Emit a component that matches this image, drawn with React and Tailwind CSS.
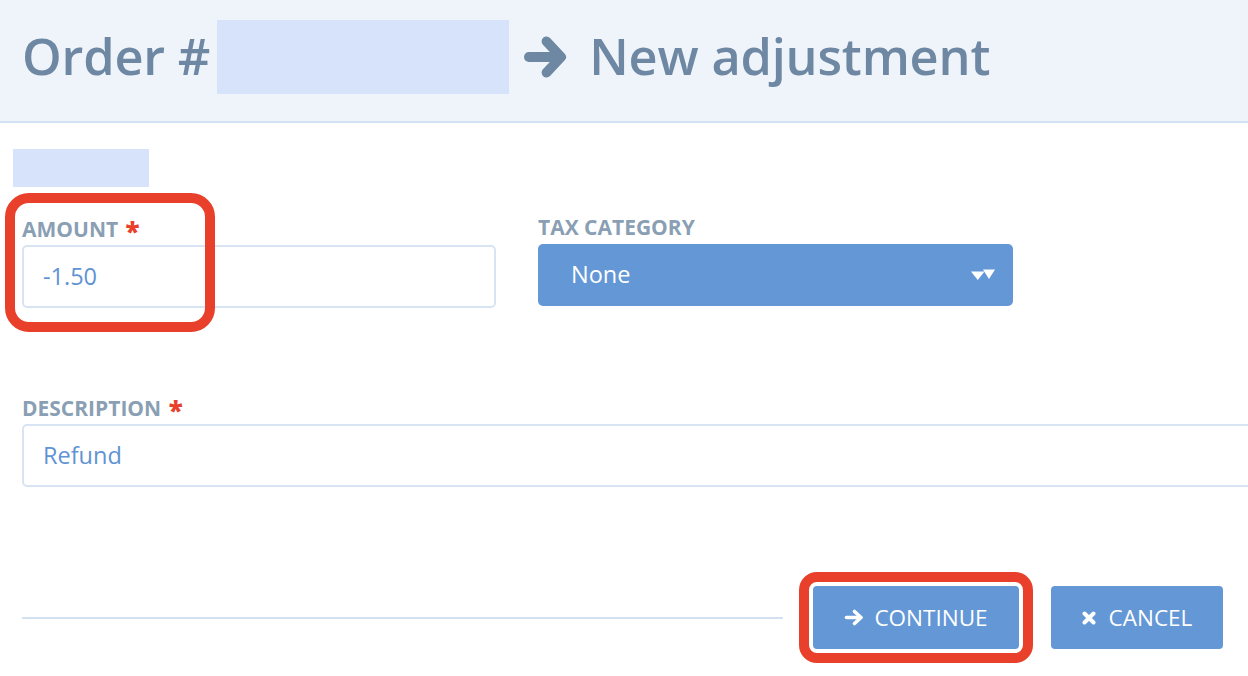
import React from "react";

const font = { fontFamily: '"Open Sans", "Noto Sans", sans-serif' };

function TitleArrow() {
  return (
    <svg viewBox="0 0 44 44" className="w-[43px] h-[44px]" fill="none" stroke="#6e88a3" strokeLinecap="round" strokeLinejoin="round">
      <path d="M5 22H37" strokeWidth="10" />
      <path d="M23 6L38 22L23 38" strokeWidth="10" />
    </svg>
  );
}

function BtnArrow() {
  return (
    <svg viewBox="0 0 20 17" className="w-[20px] h-[17px]" fill="none" stroke="white" strokeLinecap="round" strokeLinejoin="round">
      <path d="M2.5 8.5H16.5" strokeWidth="3.6" />
      <path d="M10.5 2.5L17 8.5L10.5 14.5" strokeWidth="3.6" />
    </svg>
  );
}

function XIcon() {
  return (
    <svg viewBox="0 0 14 14" className="w-[14px] h-[14px]" fill="none" stroke="white" strokeLinecap="round">
      <path d="M2.5 2.5L11.5 11.5M11.5 2.5L2.5 11.5" strokeWidth="4" />
    </svg>
  );
}

function Caret() {
  return (
    <svg viewBox="0 0 24 12" className="w-[24px] h-[12px]" fill="white">
      <path d="M0 2.5h13.5L6.75 11z" />
      <path d="M12 0.5h12l-6 9.5z" />
    </svg>
  );
}

const labelCls = "block h-[26px] text-[21px] leading-[26px] font-bold text-[#8a9fb4] whitespace-nowrap";

function Star() {
  return <span className="relative top-[4px] ml-[2px] text-[#e8402a] text-[26px] font-extrabold leading-none">*</span>;
}

export default function App() {
  return (
    <div className="w-[1248px] h-[676px] bg-white overflow-hidden" style={font}>
      <header className="h-[123px] bg-[#eff4fb] border-b-2 border-[#d3e2f3] flex items-center pl-[22px] pb-[8px]">
        <h1 className="flex items-center text-[50.5px] font-semibold text-[#6e88a3] leading-none tracking-[-0.2px]">
          <span>Order #</span>
          <span className="ml-[7px] w-[292px] h-[74px] bg-[#d6e3fa]" />
          <span className="ml-[15px]"><TitleArrow /></span>
          <span className="ml-[22px]">New adjustment</span>
        </h1>
      </header>

      <div className="relative">
        <div className="ml-[13px] mt-[26px] w-[136px] h-[38px] bg-[#d6e3fa]" />

        <div className="flex px-[22px] mt-[27px] gap-[42px]">
          <div className="relative w-[474px]">
            <div className="absolute left-[-17px] top-[-21px] w-[210px] h-[139px] border-[10px] border-[#e8402a] rounded-[24px] pointer-events-none" />
            <label className={labelCls}>
              AMOUNT <Star />
            </label>
            <div className="mt-[5px] h-[63px] border-2 border-[#d8e4f3] rounded-[5px] flex items-center pl-[19px] text-[23.5px] text-[#5f93d4]">
              -1.50
            </div>
          </div>
          <div className="w-[475px]">
            <label className={labelCls}>TAX CATEGORY</label>
            <div className="mt-[4px] h-[62px] bg-[#6497d6] rounded-[5px] flex items-center justify-between pl-[33px] pr-[18px] text-[23.5px] text-white">
              <span>None</span>
              <Caret />
            </div>
          </div>
        </div>

        <div className="pl-[22px] mt-[85px]">
          <label className={labelCls}>
            DESCRIPTION <Star />
          </label>
          <div className="mt-[5px] h-[63px] w-[1240px] border-2 border-[#d8e4f3] rounded-[5px] flex items-center pl-[19px] text-[23.5px] text-[#5f93d4]">
            Refund
          </div>
        </div>

        <div className="flex items-center pl-[22px] pr-[25px] mt-[99px]">
          <div className="flex-1 h-[2px] bg-[#d3e1f2]" />
          <button className="ml-[30px] w-[206px] h-[63px] bg-[#6497d6] rounded-[4px] flex items-center justify-center gap-[10px] text-white text-[22.5px] outline-[10px] outline-solid outline-[#e8402a] outline-offset-[4px]">
            <BtnArrow />
            <span>CONTINUE</span>
          </button>
          <button className="ml-[32px] w-[172px] h-[63px] bg-[#6497d6] rounded-[4px] flex items-center justify-center gap-[13px] text-white text-[22.5px]">
            <XIcon />
            <span>CANCEL</span>
          </button>
        </div>
      </div>
    </div>
  );
}
